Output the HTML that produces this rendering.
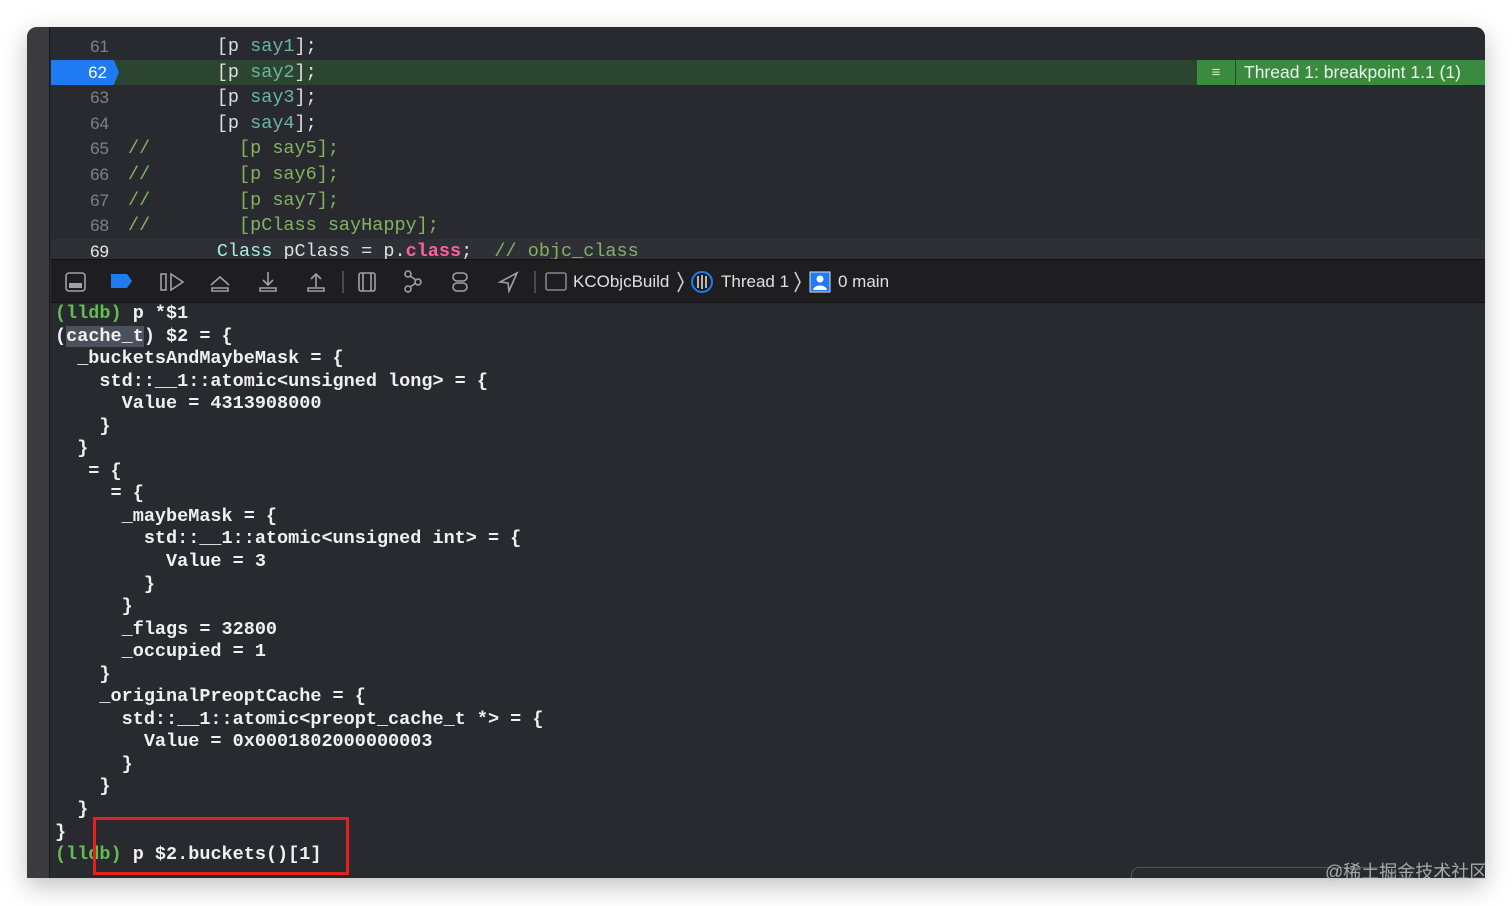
<!DOCTYPE html>
<html><head><meta charset="utf-8"><style>
*{margin:0;padding:0;box-sizing:border-box}
body{width:1512px;height:906px;background:#fff;position:relative;overflow:hidden;font-family:"Liberation Mono",monospace}
.win{position:absolute;left:27px;top:27px;width:1458px;height:851px;background:#292a30;border-radius:10px 10px 0 0;overflow:hidden;box-shadow:0 8px 25px rgba(0,0,0,.25)}
.side{position:absolute;left:0;top:0;width:23px;height:851px;background:#3b3b3e;border-right:1px solid #1a1a1c}
.ed{position:absolute;left:24px;top:0;right:0;height:232px;background:#292a30}
.ln{position:absolute;left:0;height:25.6px;width:100%;font-size:18.5px;line-height:25.6px;color:#dfdfe0;white-space:pre}
.num{position:absolute;left:0;width:58px;text-align:right;color:#7f8088;font-family:"Liberation Sans",sans-serif;font-size:17px}
.code{position:absolute;left:77px}
.m{color:#67b7a4}.c{color:#84b360}.k{color:#9ef1dd}.p{color:#fc5fa3;font-weight:bold}
.tb{position:absolute;left:24px;top:232px;right:0;height:44px;background:#1e1e21;border-top:1px solid #111;border-bottom:1px solid #111}
.con{position:absolute;left:28px;top:276px;font-size:18.5px;line-height:22.55px;color:#f0f0f0;font-weight:bold;white-space:pre}
.g{color:#5fbf4f}
.t{position:absolute;top:0;line-height:44px;font-family:'Liberation Sans',sans-serif;font-size:17px;color:#e0e0e0}
</style></head><body>
<div class="win">
<div class="side"></div>
<div class="ed">
<div class="ln" style="top:7px"><span class="num">61</span><span class="code">        [p <span class="m">say1</span>];</span></div>
<div class="ln" style="top:32.6px;background:#2c4531"><span class="num" style="background:#1f7bf2;color:#fff;width:68px;padding-right:12px;clip-path:polygon(0 0,92% 0,100% 50%,92% 100%,0 100%)">62</span><span class="code">        [p <span class="m">say2</span>];</span>
<div style="position:absolute;left:1146px;top:0;width:38px;height:25px;background:#3a8a40;color:#cfe8cf;font-family:'Liberation Sans';font-size:15px;text-align:center;line-height:25px">≡</div>
<div style="position:absolute;left:1185px;top:0;width:250px;height:25px;background:#3a8a40;color:#e8f5e8;font-family:'Liberation Sans',sans-serif;font-size:17.5px;line-height:25px;padding-left:8px">Thread 1: breakpoint 1.1 (1)</div></div>
<div class="ln" style="top:58.2px"><span class="num">63</span><span class="code">        [p <span class="m">say3</span>];</span></div>
<div class="ln" style="top:83.8px"><span class="num">64</span><span class="code">        [p <span class="m">say4</span>];</span></div>
<div class="ln" style="top:109.4px"><span class="num">65</span><span class="code c">//        [p say5];</span></div>
<div class="ln" style="top:135px"><span class="num">66</span><span class="code c">//        [p say6];</span></div>
<div class="ln" style="top:160.6px"><span class="num">67</span><span class="code c">//        [p say7];</span></div>
<div class="ln" style="top:186.2px"><span class="num">68</span><span class="code c">//        [pClass sayHappy];</span></div>
<div class="ln" style="top:211.8px;background:#2f3036"><span class="num" style="color:#e8e8e8">69</span><span class="code">        <span class="k">Class</span> pClass = p.<span class="p">class</span>;  <span class="c">// objc_class</span></span></div>
</div>
<div class="tb">
<svg width="860" height="44" style="position:absolute;left:0;top:0" fill="none" stroke="#a0a0a5" stroke-width="1.6">
<rect x="15" y="13" width="19" height="18" rx="3"/><rect x="18" y="23" width="13" height="5" fill="#a0a0a5" stroke="none"/>
<path d="M60 14h16l5 7-5 7H60z" fill="#1f7bf2" stroke="none"/>
<rect x="110" y="14" width="5" height="16"/><path d="M120 14l12 8-12 8z"/>
<path d="M160 25l9-8 9 8M161 28h16v3h-16z"/>
<path d="M217 12v13M212 20l5 5 5-5M209 28h16v3h-16z"/>
<path d="M265 14v13M260 19l5-5 5 5M257 28h16v3h-16z"/>
<line x1="292" y1="11" x2="292" y2="33" stroke="#555"/>
<rect x="308" y="13" width="16" height="18" rx="2"/><path d="M312 13v18M320 13v18"/>
<circle cx="357" cy="14" r="3"/><circle cx="357" cy="29" r="3"/><circle cx="367" cy="22" r="3"/><path d="M359 16l6 4M359 27l6-4"/>
<rect x="402" y="13" width="14" height="8" rx="4"/><rect x="402" y="23" width="14" height="8" rx="4"/>
<path d="M466 13l-17 9 8 1 1 8z"/>
<line x1="484" y1="11" x2="484" y2="33" stroke="#555"/>
<rect x="495" y="13" width="20" height="17" rx="2" stroke="#888"/>
<path d="M627 12l5 10-5 10M744 12l5 10-5 10" stroke="#ccc"/>
<circle cx="651" cy="22" r="10" stroke="#1f7bf2" stroke-width="2"/><path d="M647 16v12M651 15v14M655 16v12" stroke="#ddd"/>
<rect x="759" y="12" width="20" height="20" fill="#1f7bf2" stroke="#ddd" stroke-width="1"/><circle cx="769" cy="19" r="3.5" fill="#fff" stroke="none"/><path d="M762 30c1-6 13-6 14 0z" fill="#fff" stroke="none"/>
</svg>
<div class="t" style="left:522px">KCObjcBuild</div>
<div class="t" style="left:670px">Thread 1</div>
<div class="t" style="left:787px">0 main</div>
</div>
<div class="con"><span class="g">(lldb)</span> p *$1
(<span style="background:#4a505c">cache_t</span>) $2 = {
  _bucketsAndMaybeMask = {
    std::__1::atomic&lt;unsigned long&gt; = {
      Value = 4313908000
    }
  }
   = {
     = {
      _maybeMask = {
        std::__1::atomic&lt;unsigned int&gt; = {
          Value = 3
        }
      }
      _flags = 32800
      _occupied = 1
    }
    _originalPreoptCache = {
      std::__1::atomic&lt;preopt_cache_t *&gt; = {
        Value = 0x0001802000000003
      }
    }
  }
}
<span class="g">(lldb)</span> p $2.buckets()[1]</div>
<div style="position:absolute;left:1104px;top:840px;width:260px;height:30px;border:1px solid #555;border-radius:8px"></div>
</div>
<div style="position:absolute;left:93px;top:817px;width:256px;height:58px;border:3px solid #e5201c"></div>
<div style="position:absolute;left:1325px;top:858px;font-family:'Liberation Sans','Noto Sans CJK SC',sans-serif;font-size:18px;color:rgba(200,200,200,.8)">@稀土掘金技术社区</div>
</body></html>
